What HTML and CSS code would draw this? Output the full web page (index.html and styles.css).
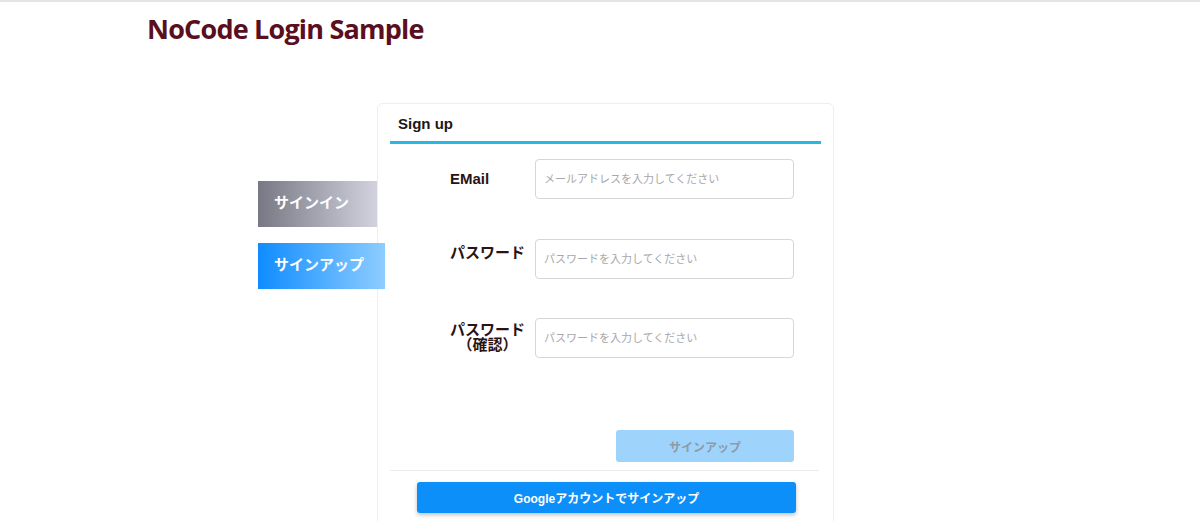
FILE: index.html
```html
<!DOCTYPE html>
<html lang="ja">
<head>
    <meta charset="UTF-8">
    <title>NoCode Login Sample</title>
    <link rel="stylesheet" href="styles.css">
</head>
<body>
<div class="page">
    <header class="site-header">
        <h1 class="site-title">NoCode Login Sample</h1>
    </header>

    <main class="main">
        <nav class="tabs">
            <div class="tab tab-signin">サインイン</div>
            <div class="tab tab-signup">サインアップ</div>
        </nav>

        <section class="card">
            <div class="card-head">
                <h2 class="card-title">Sign up</h2>
            </div>

            <form class="form">
                <div class="form-row">
                    <div class="label-box"><span class="label">EMail</span></div>
                    <input class="input" type="text" placeholder="メールアドレスを入力してください">
                </div>
                <div class="form-row">
                    <div class="label-box label-up"><span class="label">パスワード</span></div>
                    <input class="input" type="password" placeholder="パスワードを入力してください">
                </div>
                <div class="form-row form-row-last">
                    <div class="label-box"><span class="label">パスワード<br>（確認）</span></div>
                    <input class="input" type="password" placeholder="パスワードを入力してください">
                </div>

                <div class="submit-row">
                    <button class="submit-button" type="button" disabled>サインアップ</button>
                </div>
            </form>

            <hr class="divider">

            <div class="google-row">
                <button class="google-button" type="button">Googleアカウントでサインアップ</button>
            </div>
        </section>
    </main>
</div>
</body>
</html>
```

FILE: styles.css
```css
/* Farben */
:root {
  --title-color: #5a0e1e;
  --label-color: #2b1313;
  --line-color: #29b8e2;
  --border-color: #d6d6d6;
  --card-border: #eeeeee;
  --blue: #0d8ffa;
}

/* allgemein */
body {
  margin: 0;
  padding: 0;
  background: #fff;
  font-family: "Liberation Sans", "Noto Sans CJK JP", sans-serif;
  border-top: 2px solid #e4e4e4;
}

.page {
  min-height: 600px;
}

/* Kopf */
.site-header {
  padding: 10px 0 0 147px;
  height: 46px;
}

.site-title {
  margin: 0;
  font-family: "Open Sans", sans-serif;
  font-size: 27px;
  font-weight: 700;
  letter-spacing: -0.8px;
  color: var(--title-color);
  line-height: 34px;
}

/* Layout */
.main {
  display: flex;
  align-items: flex-start;
  padding: 45px 0 0 258px;
}

.tabs {
  display: flex;
  flex-direction: column;
  gap: 16px;
  width: 119px;
  margin-top: 78px;
  position: relative;
  z-index: 1;
}

.tab {
  height: 46px;
  line-height: 44px;
  padding-left: 16px;
  color: #fff;
  font-size: 15px;
  font-weight: 700;
  box-sizing: border-box;
}

.tab-signin {
  width: 119px;
  background: linear-gradient(to right, #787884, #d2d2de);
}

.tab-signup {
  width: 127px;
  background: linear-gradient(to right, #0f8cff, #8ecdff);
}

/* Karte */
.card {
  width: 457px;
  height: 480px;
  box-sizing: border-box;
  border: 1px solid var(--card-border);
  border-radius: 6px;
  padding: 0 12px;
}

.card-head {
  border-bottom: 3px solid var(--line-color);
  padding: 12px 8px 9px;
}

.card-title {
  margin: 0;
  font-size: 15px;
  font-weight: 700;
  color: #1e1616;
  line-height: 16px;
}

.form {
  padding: 15px 0 0 0;
}

.form-row {
  display: flex;
  align-items: center;
  height: 40px;
  margin-bottom: 40px;
}

.form-row-last {
  margin-top: -1px;
}

.label-box {
  width: 145px;
  padding-left: 60px;
  box-sizing: border-box;
}

.label-up {
  margin-bottom: 12px;
}

.label {
  display: inline-block;
  text-align: center;
  font-size: 15px;
  font-weight: 700;
  line-height: 15px;
  color: var(--label-color);
}

.input {
  width: 259px;
  height: 40px;
  box-sizing: border-box;
  border: 1px solid var(--border-color);
  border-radius: 4px;
  padding: 0 8px;
  font-family: inherit;
  font-size: 11px;
}

.input::placeholder {
  color: #a8a8a8;
}

.submit-row {
  display: flex;
  justify-content: flex-end;
  padding-right: 27px;
  margin-top: 72px;
}

.submit-button {
  width: 178px;
  height: 32px;
  border: none;
  border-radius: 3px;
  background: #9ed3fc;
  color: #8f9aa5;
  font-family: inherit;
  font-size: 12px;
  font-weight: 700;
}

.divider {
  border: none;
  border-top: 1px solid #ececec;
  margin: 8px 2px 0 0;
}

.google-row {
  padding: 11px 0 0 27px;
}

.google-button {
  width: 379px;
  height: 31px;
  border: none;
  border-radius: 3px;
  background: var(--blue);
  color: #fff;
  font-family: inherit;
  font-size: 12px;
  font-weight: 700;
  box-shadow: 0 2px 4px rgba(0, 0, 0, 0.25);
}
```
